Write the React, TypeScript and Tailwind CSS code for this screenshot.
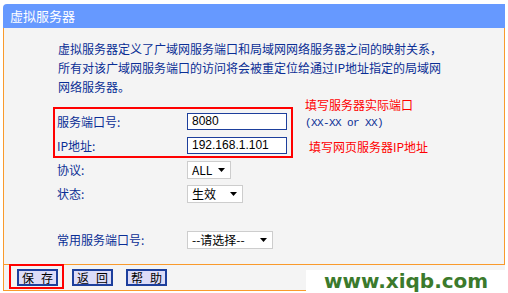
const cjk = { fontFamily: '"Noto Sans CJK SC", "Noto Sans", sans-serif' };
const mono = { fontFamily: '"Liberation Sans", "Noto Sans CJK SC", sans-serif' };

function Arrow() {
  return (
    <svg width="7" height="4" viewBox="0 0 7 4" className="shrink-0">
      <polygon points="0,0 7,0 3.5,4" fill="#000" />
    </svg>
  );
}

function FakeSelect({ value, width }: { value: string; width: string }) {
  return (
    <div
      className={`${width} h-[18px] flex items-center justify-between bg-white border border-[#cdcdcd] pl-[4px] pr-[5px] text-[12px] leading-[16px] text-black`}
    >
      <span>{value}</span>
      <Arrow />
    </div>
  );
}

function TextBox({ value }: { value: string }) {
  return (
    <div
      className="w-[100px] h-[17px] bg-white border border-[#1d3f9c] pl-[4px] text-[12px] leading-[15px] text-black"
      style={mono}
    >
      {value}
    </div>
  );
}

function Btn({ a, b }: { a: string; b: string }) {
  return (
    <div className="w-[41px] h-[17px] flex items-center justify-center gap-[7px] bg-[#dcdcf8] border-2 border-[#1d3f9c] text-[12px] leading-[13px] text-black">
      <span>{a}</span>
      <span>{b}</span>
    </div>
  );
}

export default function App() {
  return (
    <div className="relative w-[508px] h-[293px] bg-white overflow-hidden pt-[4px] pl-[3px]" style={cjk}>
      <div className="w-[502px]">
        {/* title bar */}
        <div className="h-[24px] bg-[#6699ff] rounded-tl-[4px] pl-[7px] text-white text-[13px] leading-[24px]">
          虚拟服务器
        </div>

        {/* body */}
        <div className="h-[237px] bg-[#f4f4f4] border-x border-b border-[#f99a2c] pt-[11px]">
          <p className="pl-[54px] text-[12px] leading-[19px] text-[#0a2e95]">
            虚拟服务器定义了广域网服务端口和局域网网络服务器之间的映射关系，
            <br />
            所有对该广域网服务端口的访问将会被重定位给通过IP地址指定的局域网
            <br />
            网络服务器。
          </p>

          <div className="pl-[49px] text-[12px] text-[#0a2e95]">
            <div className="flex items-start">
              <div className="mt-[11px] w-[240px] border-2 border-[#ff0000] pl-[2px] pr-[4px] pt-[4px] pb-[2px] flex flex-col gap-[7px]">
                <div className="flex items-center">
                  <span className="w-[130px] leading-[17px]">服务端口号:</span>
                  <TextBox value="8080" />
                </div>
                <div className="flex items-center">
                  <span className="w-[130px] leading-[17px]">IP地址:</span>
                  <TextBox value="192.168.1.101" />
                </div>
              </div>
              <div className="ml-[12px] flex flex-col text-[12px] leading-[18px]">
                <span className="text-[#ff0000]">填写服务器实际端口</span>
                <span
                  className="text-[#0a2e95] text-[11px] tracking-[-0.6px]"
                  style={{ fontFamily: '"Liberation Mono", monospace' }}
                >
                  (XX-XX or XX)
                </span>
                <span className="mt-[6px] ml-[4px] text-[#ff0000]">填写网页服务器IP地址</span>
              </div>
            </div>

            <div className="mt-[3px] pl-[4px] flex items-center">
              <span className="w-[130px]">协议:</span>
              <FakeSelect value="ALL" width="w-[44px]" />
            </div>
            <div className="mt-[6px] pl-[4px] flex items-center">
              <span className="w-[130px]">状态:</span>
              <FakeSelect value="生效" width="w-[56px]" />
            </div>
            <div className="mt-[28px] pl-[4px] flex items-center">
              <span className="w-[130px]">常用服务端口号:</span>
              <FakeSelect value="--请选择--" width="w-[86px]" />
            </div>
          </div>
        </div>

        {/* footer */}
        <div className="h-[26px] bg-[#f4f4f4] border-l border-b border-[#f99a2c] flex items-start pl-[5px]">
          <div className="-mt-[1px] h-[25px] border-2 border-[#ff0000] pl-[6px] pr-[4px] pt-[3px]">
            <Btn a="保" b="存" />
          </div>
          <div className="ml-[8px] mt-[4px]">
            <Btn a="返" b="回" />
          </div>
          <div className="ml-[13px] mt-[4px]">
            <Btn a="帮" b="助" />
          </div>
        </div>
      </div>

      {/* watermark */}
      <div className="absolute left-[306px] top-[270px] w-[202px] h-[23px] bg-white flex items-center pl-[18px]">
        <span
          className="text-[20px] leading-[23px] font-bold text-[#3b7a2c]"
          style={{ fontFamily: '"DejaVu Sans", sans-serif' }}
        >
          www.xiqb.com
        </span>
      </div>
    </div>
  );
}
